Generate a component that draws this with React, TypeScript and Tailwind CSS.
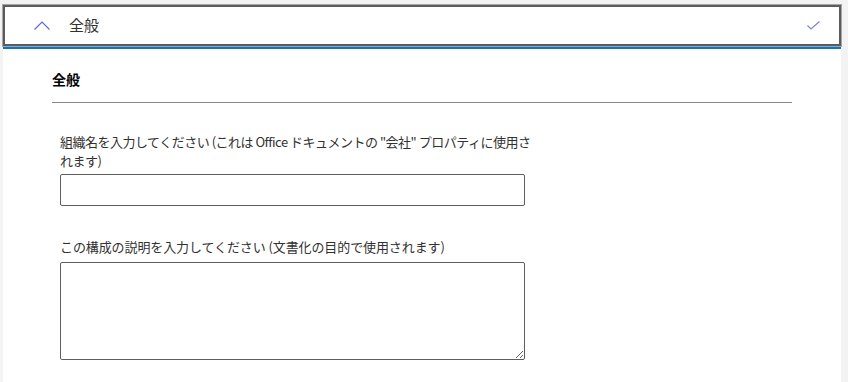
import { useState } from 'react';

const font = { fontFamily: '"Noto Sans CJK JP", "Noto Sans", sans-serif' };

export default function App() {
  const [open, setOpen] = useState(true);
  const [orgName, setOrgName] = useState('');
  const [desc, setDesc] = useState('');

  return (
    <div className="h-[382px] w-full overflow-hidden bg-[#f3f3f3] pl-[2px] pr-[6px] pt-[4px] text-[#323130]" style={font}>
      <div className="border border-[#a6a6a6]">
        <button
          onClick={() => setOpen(!open)}
          className="flex h-[41px] w-full items-center border-2 border-[#5c5c5c] bg-white pl-[29px] pr-[19px] text-left"
        >
          <svg width="16" height="9" viewBox="0 0 16 9" fill="none" className={open ? '' : 'rotate-180'}>
            <path d="M0.5 8.5L8 1L15.5 8.5" stroke="#5a63e0" strokeWidth="1.1" />
          </svg>
          <span className="ml-[19px] text-[15px]">全般</span>
          <svg width="13" height="9" viewBox="0 0 13 9" fill="none" className="ml-auto">
            <path d="M0.5 4.5L4 8L12.5 0.5" stroke="#7d7fd8" strokeWidth="1.1" />
          </svg>
        </button>
      </div>
      <div className="ml-px mr-px h-[2px] bg-[#0078d4]" />
      {open && (
        <div className="ml-px mr-px h-full bg-white px-[49px]">
          <div className="border-b border-[#8a8886] pb-[13px] pt-[20px]">
            <h2 className="text-[14px] font-bold leading-[20px] text-black">全般</h2>
          </div>
          <div className="flex flex-col pl-[8px] pt-[29px]">
            <label className="w-[472px] text-[13px] leading-[19px] tracking-[-0.5px]">
              組織名を入力してください (これは Office ドキュメントの "会社" プロパティに使用されます)
            </label>
            <input
              value={orgName}
              onChange={(e) => setOrgName(e.target.value)}
              className="mt-[4px] h-[32px] w-[465px] rounded-[2px] border border-[#605e5c] px-2 text-[13px] outline-none"
            />
            <label className="mt-[31px] text-[13px] leading-[19px] tracking-[-0.1px]">
              この構成の説明を入力してください (文書化の目的で使用されます)
            </label>
            <textarea
              value={desc}
              onChange={(e) => setDesc(e.target.value)}
              className="mt-[6px] h-[98px] w-[465px] rounded-[2px] border border-[#605e5c] px-2 text-[13px] outline-none"
            />
          </div>
        </div>
      )}
    </div>
  );
}
